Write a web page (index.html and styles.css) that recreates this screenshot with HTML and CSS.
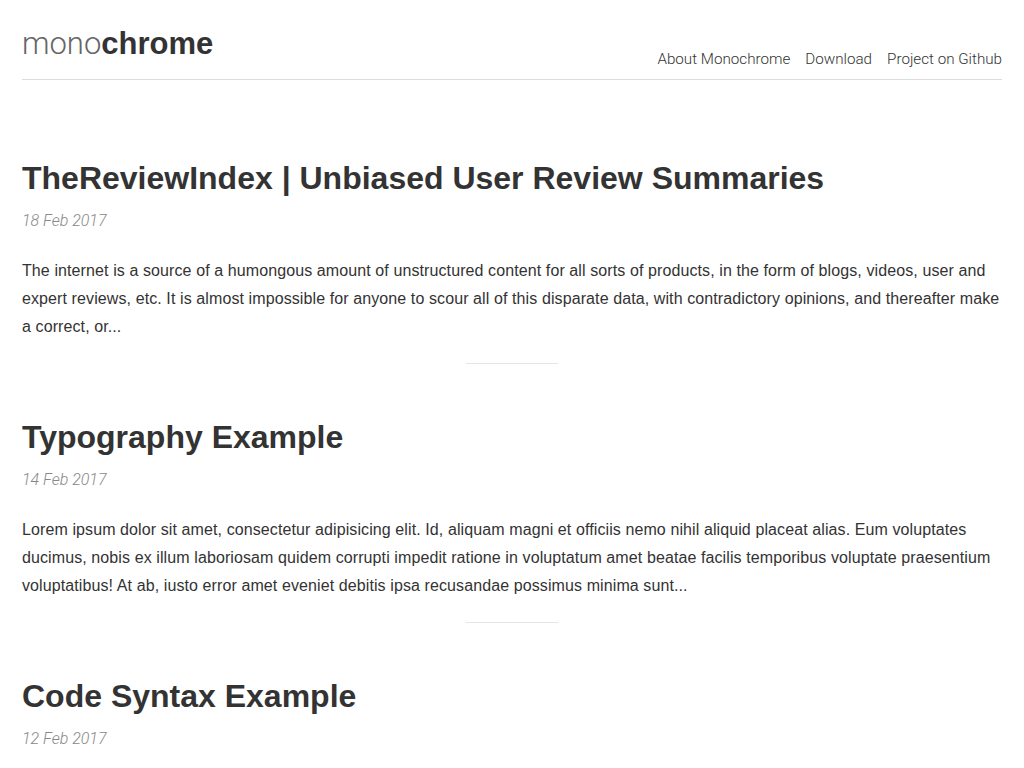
FILE: index.html
```html
<!DOCTYPE html>
<html>
<head>
<meta charset="utf-8">
<title>monochrome</title>
<link rel="stylesheet" href="styles.css">
</head>
<body>
<div class="wrap">
  <header class="site-header">
    <a class="logo" href="#"><span class="logo-light">mono</span><span class="logo-bold">chrome</span></a>
    <nav class="nav">
      <a href="#">About Monochrome</a>
      <a href="#">Download</a>
      <a href="#">Project on Github</a>
    </nav>
  </header>
  <main class="posts">
    <article class="post">
      <h2 class="post-title">TheReviewIndex | Unbiased User Review Summaries</h2>
      <div class="post-date">18 Feb 2017</div>
      <p class="post-excerpt">The internet is a source of a humongous amount of unstructured content for all sorts of products, in the form of blogs, videos, user and expert reviews, etc. It is almost impossible for anyone to scour all of this disparate data, with contradictory opinions, and thereafter make a correct, or...</p>
    </article>
    <hr class="sep">
    <article class="post">
      <h2 class="post-title">Typography Example</h2>
      <div class="post-date">14 Feb 2017</div>
      <p class="post-excerpt">Lorem ipsum dolor sit amet, consectetur adipisicing elit. Id, aliquam magni et officiis nemo nihil aliquid placeat alias. Eum voluptates ducimus, nobis ex illum laboriosam quidem corrupti impedit ratione in voluptatum amet beatae facilis temporibus voluptate praesentium voluptatibus! At ab, iusto error amet eveniet debitis ipsa recusandae possimus minima sunt...</p>
    </article>
    <hr class="sep">
    <article class="post">
      <h2 class="post-title">Code Syntax Example</h2>
      <div class="post-date">12 Feb 2017</div>
    </article>
  </main>
</div>
</body>
</html>
```
FILE: styles.css
```css
html, body {
  margin: 0;
  padding: 0;
  background: #fff;
}
body {
  font-family: "Liberation Sans", Arial, sans-serif;
  color: #333;
  font-size: 16px;
  line-height: 28px;
}
a {
  color: inherit;
  text-decoration: none;
}
.wrap {
  padding: 0 22px;
}
.site-header {
  display: flex;
  justify-content: space-between;
  align-items: flex-end;
  border-bottom: 1px solid #ddd;
  height: 79px;
}
.logo {
  font-size: 31px;
  line-height: 30px;
  margin-bottom: 20px;
  color: #333;
}
.logo-light {
  font-family: Roboto, "Liberation Sans", sans-serif;
  font-weight: 300;
  color: #666;
}
.logo-bold {
  font-weight: bold;
}
.nav {
  display: flex;
  gap: 15px;
  font-family: Roboto, "Liberation Sans", sans-serif;
  font-weight: 300;
  font-size: 15.2px;
  line-height: 20px;
  margin-bottom: 10px;
}
.posts {
  padding-top: 79px;
}
.post-title {
  margin: 0;
  font-size: 32px;
  line-height: 38px;
  font-weight: bold;
  color: #333;
}
.post-date {
  margin-top: 10px;
  font-family: Roboto, "Liberation Sans", sans-serif;
  font-weight: 300;
  font-style: italic;
  color: #888;
}
.post-excerpt {
  margin: 22px 0 0;
  letter-spacing: 0.1px;
}
.sep {
  width: 92px;
  margin: 22px auto 54px;
  border: 0;
  border-top: 1px solid #e5e5e5;
  height: 0;
}
```
